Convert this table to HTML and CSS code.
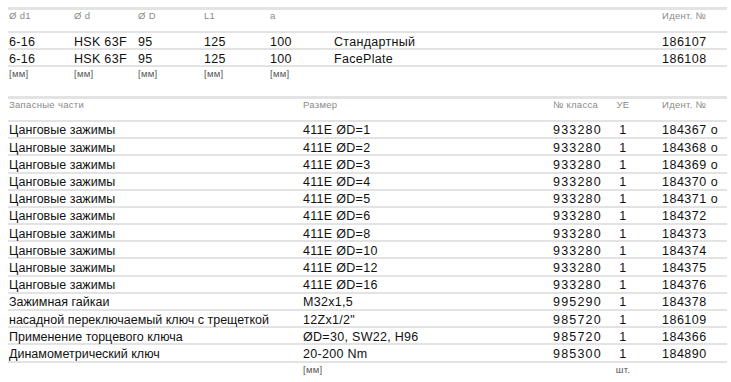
FILE: index.html
```html
<!DOCTYPE html>
<html lang="ru">
<head>
<meta charset="utf-8">
<link rel="stylesheet" href="styles.css">
</head>
<body>
<div class="page">
  <section class="tbl main">
    <div class="row head">
      <span>Ø d1</span><span>Ø d</span><span>Ø D</span><span>L1</span><span>a</span><span></span><span>Идент. №</span>
    </div>
    <div class="row data">
      <span>6-16</span><span>HSK 63F</span><span>95</span><span>125</span><span>100</span><span>Стандартный</span><span class="num">186107</span>
    </div>
    <div class="row data">
      <span>6-16</span><span>HSK 63F</span><span>95</span><span>125</span><span>100</span><span>FacePlate</span><span class="num">186108</span>
    </div>
    <div class="row unit">
      <span>[мм]</span><span>[мм]</span><span>[мм]</span><span>[мм]</span><span>[мм]</span><span></span><span></span>
    </div>
  </section>

  <section class="tbl parts">
    <div class="row head">
      <span>Запасные части</span><span>Размер</span><span>№ класса</span><span class="c">УЕ</span><span class="id">Идент. №</span>
    </div>
    <div class="row data"><span class="name">Цанговые зажимы</span><span>411E ØD=1</span><span class="cls">933280</span><span class="c">1</span><span class="id num">184367 o</span></div>
    <div class="row data"><span class="name">Цанговые зажимы</span><span>411E ØD=2</span><span class="cls">933280</span><span class="c">1</span><span class="id num">184368 o</span></div>
    <div class="row data"><span class="name">Цанговые зажимы</span><span>411E ØD=3</span><span class="cls">933280</span><span class="c">1</span><span class="id num">184369 o</span></div>
    <div class="row data"><span class="name">Цанговые зажимы</span><span>411E ØD=4</span><span class="cls">933280</span><span class="c">1</span><span class="id num">184370 o</span></div>
    <div class="row data"><span class="name">Цанговые зажимы</span><span>411E ØD=5</span><span class="cls">933280</span><span class="c">1</span><span class="id num">184371 o</span></div>
    <div class="row data"><span class="name">Цанговые зажимы</span><span>411E ØD=6</span><span class="cls">933280</span><span class="c">1</span><span class="id num">184372</span></div>
    <div class="row data"><span class="name">Цанговые зажимы</span><span>411E ØD=8</span><span class="cls">933280</span><span class="c">1</span><span class="id num">184373</span></div>
    <div class="row data"><span class="name">Цанговые зажимы</span><span>411E ØD=10</span><span class="cls">933280</span><span class="c">1</span><span class="id num">184374</span></div>
    <div class="row data"><span class="name">Цанговые зажимы</span><span>411E ØD=12</span><span class="cls">933280</span><span class="c">1</span><span class="id num">184375</span></div>
    <div class="row data"><span class="name">Цанговые зажимы</span><span>411E ØD=16</span><span class="cls">933280</span><span class="c">1</span><span class="id num">184376</span></div>
    <div class="row data"><span class="name">Зажимная гайкаи</span><span>M32x1,5</span><span class="cls">995290</span><span class="c">1</span><span class="id num">184378</span></div>
    <div class="row data"><span class="name">насадной переключаемый ключ с трещеткой</span><span>12Zx1/2"</span><span class="cls">985720</span><span class="c">1</span><span class="id num">186109</span></div>
    <div class="row data"><span class="name">Применение торцевого ключа</span><span>ØD=30, SW22, H96</span><span class="cls">985720</span><span class="c">1</span><span class="id num">184366</span></div>
    <div class="row data"><span class="name">Динамометрический ключ</span><span>20-200 Nm</span><span class="cls">985300</span><span class="c">1</span><span class="id num">184890</span></div>
    <div class="row unit"><span></span><span>[мм]</span><span></span><span class="c">шт.</span><span></span></div>
  </section>
</div>
</body>
</html>
```

FILE: styles.css
```css
html, body {
  margin: 0;
  padding: 0;
  background: #ffffff;
}
body {
  font-family: "Liberation Sans", Arial, sans-serif;
  color: #111111;
}
.page {
  padding: 7px 4px 0 8px;
}
.tbl {
  display: flex;
  flex-direction: column;
}
.row {
  display: grid;
  align-items: center;
  padding-left: 1px;
  white-space: nowrap;
}
.main .row {
  grid-template-columns: 65px 64px 66px 66px 64px 1fr 65px;
}
.parts .row {
  grid-template-columns: 294px 250px 60px 20px 1fr;
}
.parts .row .c {
  text-align: center;
}
.parts .row .id {
  margin-left: 29px;
}
.row.head {
  border-top: 3px solid #e3e3e3;
  border-bottom: 2px solid #e3e3e3;
  height: 26px;
  box-sizing: border-box;
  align-items: start;
  padding-top: 0;
  font-size: 9.5px;
  line-height: 11px;
  color: #8a8a8a;
  letter-spacing: 0.3px;
}
.row.data {
  height: 17.2px;
  box-sizing: border-box;
  border-bottom: 2px solid #e3e3e3;
  font-size: 12.5px;
  line-height: 14px;
  padding-top: 1.5px;
  letter-spacing: 0.3px;
}
.row.data .name {
  letter-spacing: 0;
}
.row.data .num {
  letter-spacing: 0.5px;
}
.row.data .cls {
  letter-spacing: 1.2px;
}
.row.unit {
  font-size: 9.5px;
  line-height: 11px;
  color: #555555;
  letter-spacing: 0.3px;
  align-items: start;
  box-sizing: border-box;
}
.main .row.unit {
  height: 28.6px;
  padding-top: 1px;
}
.parts .row.unit {
  height: 14px;
  padding-top: 1px;
}
```
